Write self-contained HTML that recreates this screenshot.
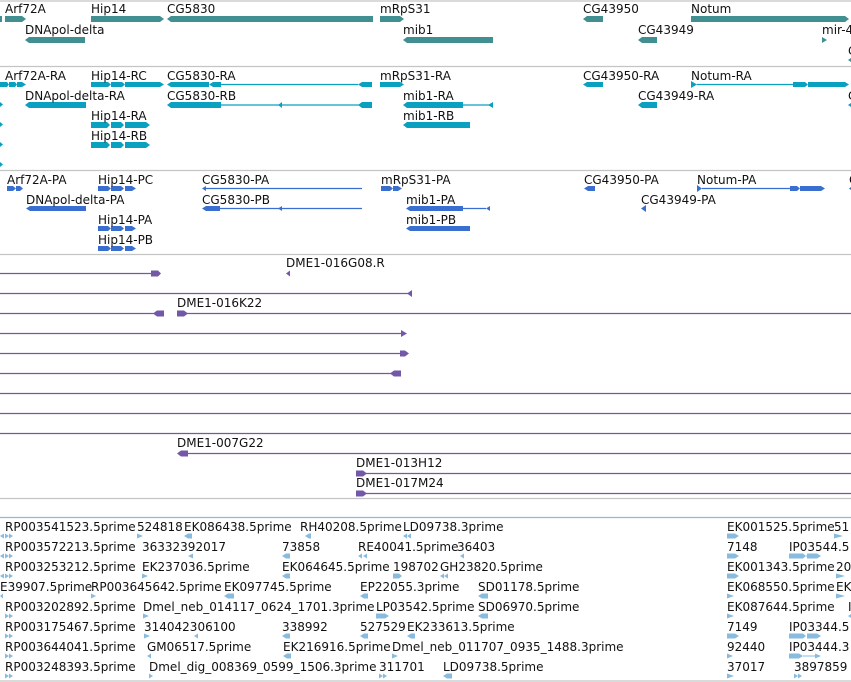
<!DOCTYPE html>
<html><head><meta charset="utf-8"><style>
html,body{margin:0;padding:0;background:#fff;width:851px;height:682px;overflow:hidden}
svg{display:block}
text{font-family:"DejaVu Sans","Liberation Sans",sans-serif;font-size:12px;fill:#111}
</style></head><body>
<svg width="851" height="682" viewBox="0 0 851 682" xmlns="http://www.w3.org/2000/svg">
<!-- separators -->
<g stroke="#c4c4c4" stroke-width="1.3">
<line x1="0" y1="1" x2="851" y2="1"/>
<line x1="0" y1="66.5" x2="851" y2="66.5"/>
<line x1="0" y1="170.5" x2="851" y2="170.5"/>
<line x1="0" y1="254.5" x2="851" y2="254.5"/>
<line x1="0" y1="498.5" x2="851" y2="498.5"/>
<line x1="0" y1="681" x2="851" y2="681"/>
</g>
<line x1="0" y1="517.5" x2="851" y2="517.5" stroke="#8cbcdc" stroke-width="1.3"/>

<!-- Track 1: genes -->
<g fill="#428f91">
<rect x="0" y="16" width="2" height="6"/>
<polygon points="5,16 22,16 26,19 22,22 5,22"/>
<polygon points="91,16 160,16 164,19 160,22 91,22"/>
<polygon points="167,19 171,16 373,16 373,22 171,22"/>
<polygon points="380,16 400,16 404,19 400,22 380,22"/>
<polygon points="583,19 587,16 603,16 603,22 587,22"/>
<polygon points="691,16 845,16 849,19 845,22 691,22"/>
<polygon points="25,40 29,37 85,37 85,43 29,43"/>
<polygon points="403,40 407,37 493,37 493,43 407,43"/>
<polygon points="638,40 642,37 657,37 657,43 642,43"/>
<polygon points="822,37 827,40 822,43"/>
<polygon points="848,60 851,58 851,62"/>
</g>
<text x="5" y="13">Arf72A</text>
<text x="91" y="13">Hip14</text>
<text x="167" y="13">CG5830</text>
<text x="380" y="13">mRpS31</text>
<text x="583" y="13">CG43950</text>
<text x="691" y="13">Notum</text>
<text x="25" y="34">DNApol-delta</text>
<text x="403" y="34">mib1</text>
<text x="638" y="34">CG43949</text>
<text x="822" y="34">mir-4</text>
<text x="848" y="55">C</text>

<!-- Track 2: transcripts -->
<g fill="#0aa0c0" stroke="#0aa0c0">
<g stroke="none">
<polygon points="0,82 7,82 9,84.5 7,87 0,87"/>
<polygon points="9,82 15,82 17,84.5 15,87 9,87"/>
<polygon points="17,82 22,82 26,84.5 22,87 17,87"/>
<polygon points="91,82 108,82 111,84.5 108,87 91,87"/>
<polygon points="111,82 122,82 125,84.5 122,87 111,87"/>
<polygon points="125,82 160,82 164,84.5 160,87 125,87"/>
<polygon points="167,84.5 171,82 209,82 209,87 171,87"/>
<polygon points="209,84.5 213,82 221,82 221,87 213,87"/>
<polygon points="358,84.5 362,82 372,82 372,87 362,87"/>
<polygon points="380,82 400,82 404,84.5 400,87 380,87"/>
<polygon points="583,84.5 587,82 603,82 603,87 587,87"/>
<polygon points="691,81 697,84.5 691,88"/>
<polygon points="793,82 805,82 808,84.5 805,87 793,87"/>
<polygon points="808,82 845,82 849,84.5 845,87 808,87"/>
<polygon points="25,105 29,102 86,102 86,108 29,108"/>
<polygon points="167,105 171,102 221,102 221,108 171,108"/>
<polygon points="278,105 282,102 282,108"/>
<polygon points="358,105 362,102 372,102 372,108 362,108"/>
<polygon points="403,105 407,102 463,102 463,108 407,108"/>
<polygon points="488,105 493,102 493,108"/>
<polygon points="638,105 642,102 657,102 657,108 642,108"/>
<polygon points="848,105 851,103 851,107"/>
<polygon points="91,122 107,122 110,125 107,128 91,128"/>
<polygon points="111,122 121,122 124,125 121,128 111,128"/>
<polygon points="125,122 146,122 150,125 146,128 125,128"/>
<polygon points="403,125 407,122 470,122 470,128 407,128"/>
<polygon points="91,142 107,142 110,145 107,148 91,148"/>
<polygon points="111,142 121,142 124,145 121,148 111,148"/>
<polygon points="125,142 146,142 150,145 146,148 125,148"/>
<polygon points="0,102 3,104.5 0,107"/>
<polygon points="0,122 3,124.5 0,127"/>
<polygon points="0,142 3,144.5 0,147"/>
<polygon points="0,162 3,164.5 0,167"/>
</g>
<line x1="221" y1="84.5" x2="358" y2="84.5" stroke-width="1.2"/>
<line x1="697" y1="84.5" x2="793" y2="84.5" stroke-width="1.2"/>
<line x1="221" y1="105" x2="372" y2="105" stroke-width="1.2"/>
<line x1="463" y1="105" x2="490" y2="105" stroke-width="1.2"/>
</g>
<text x="5" y="80">Arf72A-RA</text>
<text x="91" y="80">Hip14-RC</text>
<text x="167" y="80">CG5830-RA</text>
<text x="380" y="80">mRpS31-RA</text>
<text x="583" y="80">CG43950-RA</text>
<text x="691" y="80">Notum-RA</text>
<text x="25" y="100">DNApol-delta-RA</text>
<text x="167" y="100">CG5830-RB</text>
<text x="403" y="100">mib1-RA</text>
<text x="638" y="100">CG43949-RA</text>
<text x="848" y="100">C</text>
<text x="91" y="120">Hip14-RA</text>
<text x="403" y="120">mib1-RB</text>
<text x="91" y="140">Hip14-RB</text>

<!-- Track 3: proteins -->
<g fill="#3a6fcf" stroke="#3a6fcf">
<g stroke="none">
<polygon points="7,186 13,186 16,188.5 13,191 7,191"/>
<polygon points="16,186 20,186 23,188.5 20,191 16,191"/>
<polygon points="98,186 108,186 111,188.5 108,191 98,191"/>
<polygon points="111,186 121,186 124,188.5 121,191 111,191"/>
<polygon points="125,186 132,186 136,188.5 132,191 125,191"/>
<polygon points="202,188.5 206,186 206,191"/>
<polygon points="381,186 390,186 393,188.5 390,191 381,191"/>
<polygon points="393,186 398,186 402,188.5 398,191 393,191"/>
<polygon points="584,188.5 588,186 595,186 595,191 588,191"/>
<polygon points="697,185 702,188.5 697,192"/>
<polygon points="790,186 797,186 800,188.5 797,191 790,191"/>
<polygon points="800,186 821,186 825,188.5 821,191 800,191"/>
<polygon points="849,188.5 851,187 851,190"/>
<polygon points="26,208.5 30,206 86,206 86,211 30,211"/>
<polygon points="202,208.5 206,206 220,206 220,211 206,211"/>
<polygon points="278,208.5 282,206 282,211"/>
<polygon points="406,208.5 410,206 463,206 463,211 410,211"/>
<polygon points="486,208.5 490,206 490,211"/>
<polygon points="641,208.5 646,205 646,212"/>
<polygon points="98,226 108,226 111,228.5 108,231 98,231"/>
<polygon points="111,226 121,226 124,228.5 121,231 111,231"/>
<polygon points="125,226 132,226 136,228.5 132,231 125,231"/>
<polygon points="406,228.5 410,226 470,226 470,231 410,231"/>
<polygon points="98,246 108,246 111,248.5 108,251 98,251"/>
<polygon points="111,246 121,246 124,248.5 121,251 111,251"/>
<polygon points="125,246 132,246 136,248.5 132,251 125,251"/>
</g>
<line x1="206" y1="188.5" x2="362" y2="188.5" stroke-width="1.2"/>
<line x1="702" y1="188.5" x2="790" y2="188.5" stroke-width="1.2"/>
<line x1="220" y1="208.5" x2="362" y2="208.5" stroke-width="1.2"/>
<line x1="463" y1="208.5" x2="486" y2="208.5" stroke-width="1.2"/>
</g>
<text x="7" y="184">Arf72A-PA</text>
<text x="98" y="184">Hip14-PC</text>
<text x="202" y="184">CG5830-PA</text>
<text x="381" y="184">mRpS31-PA</text>
<text x="584" y="184">CG43950-PA</text>
<text x="697" y="184">Notum-PA</text>
<text x="849" y="184">C</text>
<text x="26" y="204">DNApol-delta-PA</text>
<text x="202" y="204">CG5830-PB</text>
<text x="406" y="204">mib1-PA</text>
<text x="641" y="204">CG43949-PA</text>
<text x="98" y="224">Hip14-PA</text>
<text x="406" y="224">mib1-PB</text>
<text x="98" y="244">Hip14-PB</text>

<!-- Track 4: clones -->
<g stroke="#7358a8" stroke-width="1.3">
<line x1="0" y1="273.5" x2="155" y2="273.5"/>
<line x1="0" y1="293.5" x2="410" y2="293.5"/>
<line x1="0" y1="313.5" x2="155" y2="313.5"/>
<line x1="185" y1="313.5" x2="851" y2="313.5"/>
<line x1="0" y1="333.5" x2="402" y2="333.5"/>
<line x1="0" y1="353.5" x2="402" y2="353.5"/>
<line x1="0" y1="373.5" x2="392" y2="373.5"/>
<line x1="0" y1="393.5" x2="851" y2="393.5"/>
<line x1="0" y1="413.5" x2="851" y2="413.5"/>
<line x1="0" y1="433.5" x2="851" y2="433.5"/>
<line x1="185" y1="453.5" x2="851" y2="453.5"/>
<line x1="365" y1="473.5" x2="851" y2="473.5"/>
<line x1="365" y1="493.5" x2="851" y2="493.5"/>
</g>
<g fill="#7358a8">
<polygon points="151,270.5 158,270.5 161,273.5 158,276.5 151,276.5"/>
<polygon points="286,273.5 290,270.5 290,276.5"/>
<polygon points="407,293.5 412,290 412,297"/>
<polygon points="153,313.5 157,310.5 164,310.5 164,316.5 157,316.5"/>
<polygon points="177,310.5 184,310.5 188,313.5 184,316.5 177,316.5"/>
<polygon points="401,330 407,333.5 401,337"/>
<polygon points="400,350.5 405,350.5 409,353.5 405,356.5 400,356.5"/>
<polygon points="390,373.5 394,370.5 401,370.5 401,376.5 394,376.5"/>
<polygon points="177,453.5 181,450.5 188,450.5 188,456.5 181,456.5"/>
<polygon points="356,470.5 363,470.5 367,473.5 363,476.5 356,476.5"/>
<polygon points="356,490.5 363,490.5 367,493.5 363,496.5 356,496.5"/>
</g>
<text x="286" y="267">DME1-016G08.R</text>
<text x="177" y="307">DME1-016K22</text>
<text x="177" y="447">DME1-007G22</text>
<text x="356" y="467">DME1-013H12</text>
<text x="356" y="487">DME1-017M24</text>

<!-- Track 5: ESTs -->
<g fill="#88bbdd">
<!-- row0 -->
<polygon points="0,536 4,533.5 4,538.5"/><polygon points="5,533.5 9,536 5,538.5"/><polygon points="9,533.5 13,536 9,538.5"/>
<polygon points="137,533.5 143,536 137,538.5"/>
<polygon points="184,536 188,533.5 192,533.5 192,538.5 188,538.5"/>
<polygon points="305,536 309,533.5 311,533.5 311,538.5 309,538.5"/>
<polygon points="403,536 407,533.5 407,538.5"/><polygon points="407,536 411,533.5 411,538.5"/>
<polygon points="727,533.5 735,533.5 739,536 735,538.5 727,538.5"/>
<polygon points="834,533.5 843,536 834,538.5"/>
<!-- row1 -->
<polygon points="0,556 4,553.5 4,558.5"/><polygon points="5,553.5 9,556 5,558.5"/><polygon points="9,553.5 13,556 9,558.5"/>
<polygon points="188,556 193,553.5 193,558.5"/>
<polygon points="282,556 286,553.5 290,553.5 290,558.5 286,558.5"/>
<polygon points="358,556 362,553.5 362,558.5"/><polygon points="363,556 367,553.5 367,558.5"/>
<polygon points="460,556 464,553.5 464,558.5"/>
<polygon points="727,553.5 735,553.5 739,556 735,558.5 727,558.5"/>
<polygon points="789,553.5 803,553.5 806,556 803,558.5 789,558.5"/><polygon points="807,553.5 817,553.5 821,556 817,558.5 807,558.5"/>
<!-- row2 -->
<polygon points="0,576 4,573.5 4,578.5"/><polygon points="5,573.5 9,576 5,578.5"/><polygon points="9,573.5 13,576 9,578.5"/>
<polygon points="142,573.5 148,576 142,578.5"/>
<polygon points="282,576 286,573.5 290,573.5 290,578.5 286,578.5"/>
<polygon points="393,573.5 399,573.5 402,576 399,578.5 393,578.5"/>
<polygon points="440,576 444,573.5 444,578.5"/><polygon points="444,576 448,573.5 448,578.5"/>
<polygon points="727,573.5 735,573.5 739,576 735,578.5 727,578.5"/>
<polygon points="836,573.5 845,576 836,578.5"/>
<!-- row3 -->
<polygon points="0,596 3,593.5 3,598.5"/>
<polygon points="91,593.5 96,596 91,598.5"/>
<polygon points="224,596 228,593.5 234,593.5 234,598.5 228,598.5"/>
<polygon points="360,596 364,593.5 368,593.5 368,598.5 364,598.5"/>
<polygon points="478,596 482,593.5 488,593.5 488,598.5 482,598.5"/>
<polygon points="727,593.5 734,596 727,598.5"/>
<polygon points="836,593.5 845,596 836,598.5"/>
<!-- row4 -->
<polygon points="5,613.5 9,616 5,618.5"/><polygon points="9,613.5 13,616 9,618.5"/>
<polygon points="143,613.5 149,616 143,618.5"/>
<polygon points="376,613.5 385,613.5 389,616 385,618.5 376,618.5"/>
<polygon points="478,616 482,613.5 488,613.5 488,618.5 482,618.5"/>
<polygon points="727,613.5 734,616 727,618.5"/>
<polygon points="848,616 851,614 851,618"/>
<!-- row5 -->
<polygon points="5,633.5 9,636 5,638.5"/><polygon points="9,633.5 13,636 9,638.5"/>
<polygon points="144,633.5 150,636 144,638.5"/>
<polygon points="194,636 198,633.5 198,638.5"/>
<polygon points="282,636 286,633.5 290,633.5 290,638.5 286,638.5"/>
<polygon points="360,636 364,633.5 368,633.5 368,638.5 364,638.5"/>
<polygon points="407,636 411,633.5 415,633.5 415,638.5 411,638.5"/>
<polygon points="727,633.5 735,633.5 739,636 735,638.5 727,638.5"/>
<polygon points="789,633.5 803,633.5 806,636 803,638.5 789,638.5"/><polygon points="807,633.5 817,633.5 821,636 817,638.5 807,638.5"/>
<!-- row6 -->
<polygon points="5,653.5 9,656 5,658.5"/><polygon points="9,653.5 13,656 9,658.5"/>
<polygon points="147,656 151,653.5 151,658.5"/>
<polygon points="283,656 287,653.5 291,653.5 291,658.5 287,658.5"/>
<polygon points="392,653.5 398,656 392,658.5"/>
<polygon points="727,653.5 733,656 727,658.5"/>
<polygon points="789,653.5 799,653.5 803,656 799,658.5 789,658.5"/><polygon points="815,653.5 821,656 815,658.5"/>
<!-- row7 -->
<polygon points="5,673.5 9,676 5,678.5"/><polygon points="9,673.5 13,676 9,678.5"/>
<polygon points="149,673.5 153,676 149,678.5"/>
<polygon points="379,673.5 383,676 379,678.5"/><polygon points="383,673.5 387,676 383,678.5"/>
<polygon points="443,676 447,673.5 452,673.5 452,678.5 447,678.5"/>
<polygon points="727,673.5 734,676 727,678.5"/>
<polygon points="794,673.5 798,676 794,678.5"/><polygon points="798,673.5 802,676 798,678.5"/>
</g>
<line x1="806" y1="556" x2="807" y2="556" stroke="#88bbdd"/>
<line x1="803" y1="656" x2="815" y2="656" stroke="#88bbdd"/>

<g>
<text x="5" y="531">RP003541523.5prime</text><text x="137" y="531">524818</text><text x="184" y="531">EK086438.5prime</text><text x="300" y="531">RH40208.5prime</text><text x="403" y="531">LD09738.3prime</text><text x="727" y="531">EK001525.5prime</text><text x="834" y="531">51</text>
<text x="5" y="551">RP003572213.5prime</text><text x="142" y="551">36332392017</text><text x="282" y="551">73858</text><text x="358" y="551">RE40041.5prime</text><text x="457" y="551">36403</text><text x="727" y="551">7148</text><text x="789" y="551">IP03544.5</text>
<text x="5" y="571">RP003253212.5prime</text><text x="142" y="571">EK237036.5prime</text><text x="282" y="571">EK064645.5prime</text><text x="393" y="571">198702</text><text x="440" y="571">GH23820.5prime</text><text x="727" y="571">EK001343.5prime</text><text x="836" y="571">20</text>
<text x="0" y="591">E39907.5prime</text><text x="91" y="591">RP003645642.5prime</text><text x="224" y="591">EK097745.5prime</text><text x="360" y="591">EP22055.3prime</text><text x="478" y="591">SD01178.5prime</text><text x="727" y="591">EK068550.5prime</text><text x="836" y="591">EK</text>
<text x="5" y="611">RP003202892.5prime</text><text x="143" y="611">Dmel_neb_014117_0624_1701.3prime</text><text x="376" y="611">LP03542.5prime</text><text x="478" y="611">SD06970.5prime</text><text x="727" y="611">EK087644.5prime</text><text x="848" y="611">I</text>
<text x="5" y="631">RP003175467.5prime</text><text x="144" y="631">314042306100</text><text x="282" y="631">338992</text><text x="360" y="631">527529</text><text x="407" y="631">EK233613.5prime</text><text x="727" y="631">7149</text><text x="789" y="631">IP03344.5</text>
<text x="5" y="651">RP003644041.5prime</text><text x="147" y="651">GM06517.5prime</text><text x="283" y="651">EK216916.5prime</text><text x="392" y="651">Dmel_neb_011707_0935_1488.3prime</text><text x="727" y="651">92440</text><text x="789" y="651">IP03444.3</text>
<text x="5" y="671">RP003248393.5prime</text><text x="149" y="671">Dmel_dig_008369_0599_1506.3prime</text><text x="379" y="671">311701</text><text x="443" y="671">LD09738.5prime</text><text x="727" y="671">37017</text><text x="794" y="671">3897859</text>
</g>
</svg>
</body></html>
